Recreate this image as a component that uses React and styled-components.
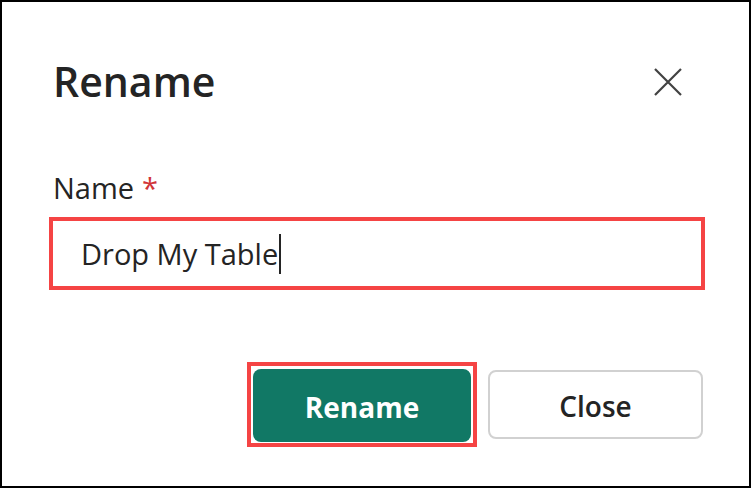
import React from 'react';
import styled, { createGlobalStyle } from 'styled-components';

// =======================
//   Global Styles
// =======================

const GlobalStyle = createGlobalStyle`
  html, body {
    margin: 0;
    padding: 0;
    background: #fff;
  }
  body {
    font-family: "Open Sans", "Noto Sans", sans-serif;
    color: #242424;
  }
`;

// =======================
//   Component Styles
// =======================

const Frame = styled.div`
  box-sizing: border-box;
  width: 751px;
  height: 488px;
  border: 2px solid #000;
  padding: 51px 46px 0 51px;
  display: flex;
  flex-direction: column;
`;

const Header = styled.div`
  display: flex;
  align-items: center;
  justify-content: space-between;
  height: 56px;
`;

const Title = styled.h1`
  margin: 0;
  font-size: 41px;
  font-weight: 600;
  line-height: 56px;
  color: #242424;
`;

const IconButton = styled.button`
  width: 28px;
  height: 28px;
  margin: 2px 21px 0 0;
  padding: 0;
  border: none;
  background: transparent;
  display: flex;
  align-items: center;
  justify-content: center;
  color: #424242;
`;

const Field = styled.div`
  display: flex;
  flex-direction: column;
  margin-top: 59px;
`;

const Label = styled.label`
  font-size: 29px;
  line-height: 40px;
  color: #242424;
`;

const Required = styled.span`
  color: #d13438;
  margin-left: 8px;
`;

// red annotation box drawn around a control
const Highlight = styled.div`
  border: 4px solid #f54444;
  margin: ${p => p.$margin || '0'};
  padding: ${p => p.$padding || '0'};
  display: flex;
  flex-direction: column;
`;

const Input = styled.div`
  box-sizing: border-box;
  height: 65px;
  padding: 0 28px;
  display: flex;
  align-items: center;
  font-size: 29px;
  color: #242424;
`;

const Caret = styled.span`
  display: inline-block;
  width: 2px;
  height: 40px;
  background: #242424;
  margin-left: 1px;
`;

const Footer = styled.div`
  display: flex;
  justify-content: flex-end;
  align-items: center;
  gap: 11px;
  margin-top: 72px;
`;

const Button = styled.button`
  box-sizing: border-box;
  width: ${p => (p.$primary ? '218px' : '215px')};
  height: ${p => (p.$primary ? '73px' : '69px')};
  border-radius: 8px;
  border: ${p => (p.$primary ? 'none' : '2px solid #d1d1d1')};
  background: ${p => (p.$primary ? '#117865' : '#fff')};
  color: ${p => (p.$primary ? '#fff' : '#242424')};
  font-family: "Open Sans", "Noto Sans", sans-serif;
  font-size: 28px;
  font-weight: ${p => (p.$primary ? 700 : 600)};
  display: flex;
  align-items: center;
  justify-content: center;
  padding: 2px 0 0;
`;

// =======================
//     Components
// =======================

const CloseIcon = () => (
  <svg width="28" height="28" viewBox="0 0 28 28">
    <path d="M1 1 L27 27 M27 1 L1 27" stroke="currentColor" strokeWidth="2.2" fill="none" />
  </svg>
);

const App = () => {
  return (
    <>
      <GlobalStyle />
      <Frame>
        <Header>
          <Title>Rename</Title>
          <IconButton aria-label="Close">
            <CloseIcon />
          </IconButton>
        </Header>

        <Field>
          <Label>
            Name<Required>*</Required>
          </Label>
          <Highlight $margin="9px -2px 0 -4px">
            <Input>
              Drop My Table<Caret />
            </Input>
          </Highlight>
        </Field>

        <Footer>
          <Highlight $padding="3px 2px 1px 2px">
            <Button $primary>Rename</Button>
          </Highlight>
          <Button>Close</Button>
        </Footer>
      </Frame>
    </>
  );
};

export default App;
